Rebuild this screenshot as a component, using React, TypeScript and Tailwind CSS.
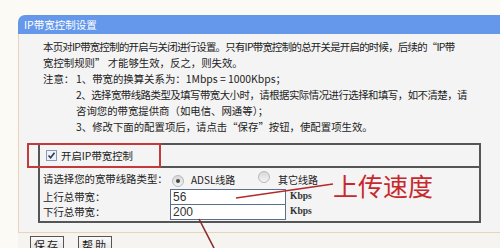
import React from 'react';

const cjk = { fontFamily: '"Noto Sans CJK SC", "Noto Sans", sans-serif' };

const Radio = ({ checked }: { checked?: boolean }) => (
  <span className="inline-flex h-[12px] w-[12px] items-center justify-center rounded-full border border-[#b9b9b9] bg-gradient-to-b from-[#d8d8d8] to-[#f4f4f4]">
    {checked && <span className="h-[4px] w-[4px] rounded-full bg-[#444]" />}
  </span>
);

const App = () => {
  const notes = [
    { lead: '注意：', text: '1、带宽的换算关系为：1Mbps = 1000Kbps；', cls: '' },
    { lead: '', text: '2、选择宽带线路类型及填写带宽大小时，请根据实际情况进行选择和填写，如不清楚，请', cls: 'tracking-[-0.5px]' },
    { lead: '', text: '咨询您的带宽提供商（如电信、网通等）；', cls: '' },
    { lead: '', text: '3、修改下面的配置项后，请点击“保存”按钮，使配置项生效。', cls: '' },
  ];

  return (
    <div className="relative h-[248px] w-[500px] overflow-hidden bg-[#fcfaf5] pl-[18px] pt-[15px] text-[#222]" style={cjk}>
      <div className="overflow-hidden rounded-tl-[7px]">
        {/* title bar */}
        <div className="h-[19px] bg-[#6598ea] pl-[6px] text-[10.5px] leading-[19px] text-white">IP带宽控制设置</div>

        {/* body */}
        <div className="border-b border-l border-[#ecd3b8] bg-[#f4f4f4] pb-[9px] pt-[5px]">
          <div className="pl-[24px] text-[10.4px] leading-[16px]">
            <div className="whitespace-nowrap tracking-[-0.72px]">本页对IP带宽控制的开启与关闭进行设置。只有IP带宽控制的总开关是开启的时候，后续的“IP带</div>
            <div className="whitespace-nowrap">宽控制规则” 才能够生效，反之，则失效。</div>
            {notes.map((n, i) => (
              <div key={i} className="flex whitespace-nowrap">
                <span className="w-[33px]">{n.lead}</span>
                <span className={n.cls}>{n.text}</span>
              </div>
            ))}
          </div>

          <div className="ml-[19px] mt-[8px] w-[443px] border-2 border-[#555]">
            <div className="flex h-[23px] items-center border-b-2 border-[#555] pl-[6px] text-[10.4px]">
              <span className="mr-[4px] inline-flex h-[11px] w-[11px] items-center justify-center border border-[#8a9bb5] bg-[#eef2f8]">
                <svg width="9" height="9" viewBox="0 0 9 9">
                  <path d="M1.5 4.5 L3.6 6.8 L7.5 1.8" fill="none" stroke="#2b3a55" strokeWidth="1.6" />
                </svg>
              </span>
              开启IP带宽控制
            </div>
            <div className="pb-[2px] pl-[3px] pt-[1px] text-[10.4px]">
              <div className="flex h-[20px] items-center">
                <span className="w-[127px]">请选择您的宽带线路类型：</span>
                <span className="ml-[2px] mr-[7px]"><Radio checked /></span>
                <span className="w-[67px] text-[10px]">ADSL线路</span>
                <span className="mr-[8px]"><Radio /></span>
                <span className="text-[10px]">其它线路</span>
              </div>
              <div className="flex h-[15px] items-center">
                <span className="w-[127px]">上行总带宽：</span>
                <div className="h-[16px] w-[116px] border border-[#5a6e8e] bg-white pl-[2px] text-[12px] leading-[14px] text-[#333]" style={{ fontFamily: '"Liberation Sans", sans-serif' }}>56</div>
                <span className="ml-[4px] text-[9.5px] font-bold text-[#333]" style={{ fontFamily: '"Liberation Serif", serif' }}>Kbps</span>
              </div>
              <div className="flex h-[15px] items-center">
                <span className="w-[127px]">下行总带宽：</span>
                <div className="h-[16px] w-[116px] border border-[#5a6e8e] bg-white pl-[2px] text-[12px] leading-[14px] text-[#333]" style={{ fontFamily: '"Liberation Sans", sans-serif' }}>200</div>
                <span className="ml-[4px] text-[9.5px] font-bold text-[#333]" style={{ fontFamily: '"Liberation Serif", serif' }}>Kbps</span>
              </div>
            </div>
          </div>
        </div>

        {/* buttons */}
        <div className="flex gap-[14px] bg-[#f6f4f1] pl-[12px] pt-[3px]">
          <button className="h-[18px] w-[34px] border border-[#555] bg-gradient-to-b from-[#fafafa] to-[#e2e0da] text-[11px] leading-[16px] tracking-[2px]">保存</button>
          <button className="h-[18px] w-[34px] border border-[#555] bg-gradient-to-b from-[#fafafa] to-[#e2e0da] text-[11px] leading-[16px] tracking-[2px]">帮助</button>
        </div>
      </div>

      {/* annotation: red box around switch */}
      <div className="absolute left-[27px] top-[143px] h-[25px] w-[134px] border-2 border-[#c23a3a]" />

      {/* annotation: arrows */}
      <svg className="absolute left-0 top-0" width="500" height="248">
        <line x1="236" y1="198" x2="333" y2="184" stroke="#b52a2a" strokeWidth="1.6" />
        <line x1="199" y1="219" x2="214" y2="248" stroke="#8a2a2a" strokeWidth="1.6" />
      </svg>

      <div className="absolute left-[333px] top-[173px] text-[25px] leading-[25px] text-[#c8282c]" style={cjk}>上传速度</div>
    </div>
  );
};

export default App;
